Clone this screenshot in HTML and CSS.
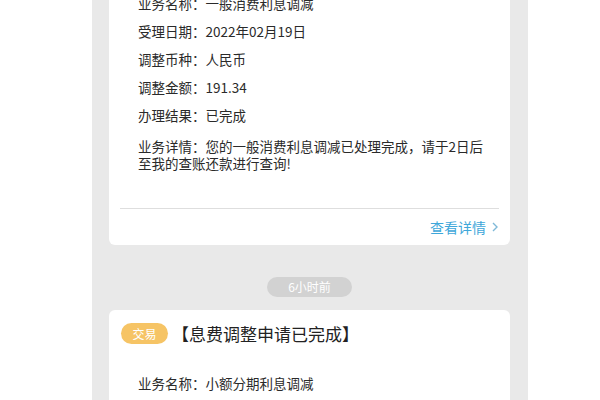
FILE: index.html
```html
<!DOCTYPE html>
<html lang="zh-CN">
<head>
<meta charset="utf-8">
<link rel="stylesheet" href="styles.css">
</head>
<body>
<div class="col">
  <div class="card card-first">
    <div class="row">业务名称：一般消费利息调减</div>
    <div class="row">受理日期：2022年02月19日</div>
    <div class="row">调整币种：人民币</div>
    <div class="row">调整金额：191.34</div>
    <div class="row">办理结果：已完成</div>
    <div class="detail">业务详情：您的一般消费利息调减已处理完成，请于2日后<br>至我的查账还款进行查询!</div>
    <div class="divider"></div>
    <div class="link-row"><span class="link">查看详情</span><svg class="chev" width="8" height="12" viewBox="0 0 8 12"><path d="M2 2 L6 6 L2 10" fill="none" stroke="#7fb9d8" stroke-width="1.4"/></svg></div>
  </div>
  <div class="time"><span class="pill">6小时前</span></div>
  <div class="card card-last">
    <div class="head"><span class="badge">交易</span><span class="title">【息费调整申请已完成】</span></div>
    <div class="row row-gap">业务名称：小额分期利息调减</div>
  </div>
</div>
</body>
</html>
```
FILE: styles.css
```css
html, body {
  margin: 0;
  padding: 0;
  background: #ffffff;
  height: 100%;
  overflow: hidden;
}
body {
  font-family: "Noto Sans CJK SC", "Noto Sans", sans-serif;
  color: #2a2a2a;
}
.col {
  margin-left: 92px;
  width: 436px;
  min-height: 100%;
  background: #e9e9e9;
  padding: 0 18px 0 17px;
  box-sizing: border-box;
  overflow: hidden;
}
.card {
  background: #ffffff;
  border-radius: 6px;
  padding-top: 12px;
}
.card-first {
  margin-top: -23px;
}
.card-last {
  padding-bottom: 20px;
}
.row {
  padding-left: 29px;
  font-size: 13.5px;
  line-height: 28px;
  height: 28px;
  white-space: nowrap;
}
.detail {
  padding-left: 29px;
  margin-top: 9px;
  font-size: 13.5px;
  line-height: 17px;
}
.divider {
  margin: 36px 11px 0;
  height: 1px;
  background: #dedede;
}
.link-row {
  height: 36px;
  display: flex;
  align-items: center;
  justify-content: flex-end;
  padding-right: 11px;
  gap: 5px;
}
.link {
  color: #3ea7da;
  font-size: 14px;
}
.time {
  display: flex;
  justify-content: center;
  margin: 32px 0 13px;
}
.pill {
  width: 85px;
  height: 20px;
  border-radius: 10px;
  background: #d2d2d2;
  color: #ffffff;
  font-size: 12px;
  line-height: 20px;
  text-align: center;
}
.head {
  display: flex;
  align-items: center;
  height: 22px;
  padding-left: 12px;
}
.badge {
  width: 47px;
  height: 21px;
  border-radius: 11px;
  background: #f6c465;
  color: #ffffff;
  font-size: 12px;
  line-height: 21px;
  text-align: center;
}
.title {
  margin-left: 4px;
  font-size: 17px;
  color: #222222;
}
.row-gap {
  margin-top: 25px;
}
```
